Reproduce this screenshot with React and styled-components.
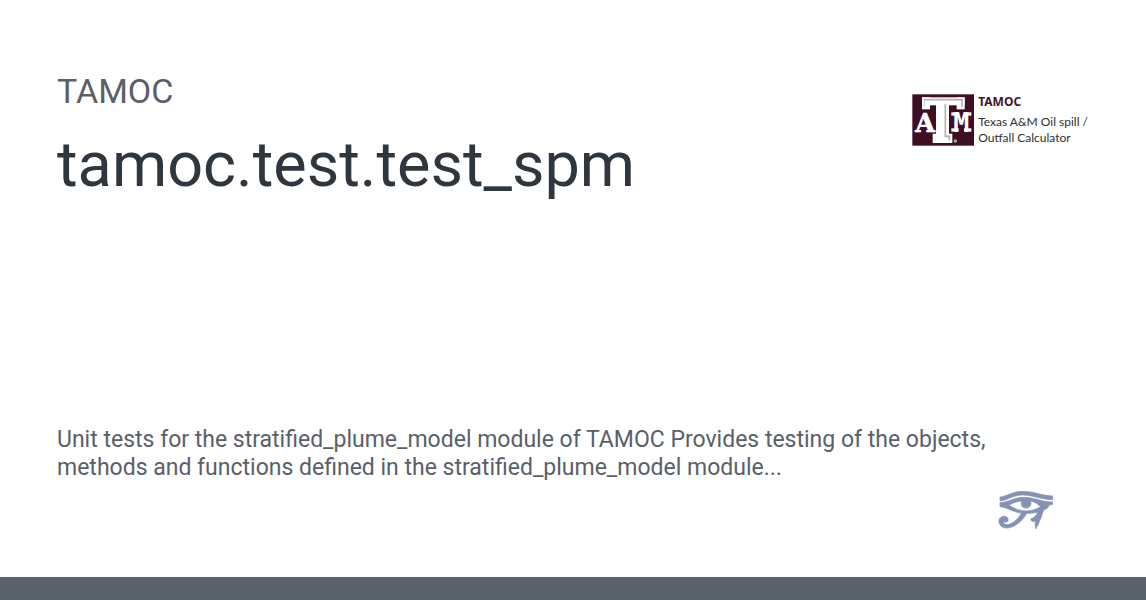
import React from "react";
import styled, { createGlobalStyle } from "styled-components";

const GlobalStyle = createGlobalStyle`
  * { box-sizing: border-box; }
  body { margin: 0; background: #ffffff; }
`;

const Card = styled.main`
  display: flex;
  flex-direction: column;
  min-height: 100vh;
  font-family: Roboto, sans-serif;
  color: #5a6069;
`;

const Content = styled.div`
  flex: 1;
  display: flex;
  flex-direction: column;
  justify-content: space-between;
  padding: 70px 58px 46px 57px;
`;

const Header = styled.header`
  display: flex;
  justify-content: space-between;
  align-items: flex-start;
`;

const SiteName = styled.p`
  margin: 0;
  font-size: 34px;
  line-height: 42px;
`;

const Title = styled.h1`
  margin: 13px 0 0;
  font-size: 63px;
  line-height: 80px;
  font-weight: 400;
  color: #2f363d;
`;

const Brand = styled.div`
  display: flex;
  gap: 4px;
  margin-top: 24px;
  font-family: Lato, sans-serif;
  font-size: 12px;
  line-height: 16px;
  white-space: nowrap;
  color: #303030;
`;

const BrandName = styled.strong`
  display: block;
  margin-bottom: 4px;
  font-family: "Noto Sans", sans-serif;
  color: #47122a;
`;

const BrandLine = styled.span`
  display: block;
`;

const Footer = styled.footer`
  display: flex;
  flex-direction: column;
`;

const Description = styled.p`
  margin: 0;
  max-width: 960px;
  font-size: 23px;
  line-height: 28px;
`;

const EyeRow = styled.div`
  display: flex;
  justify-content: flex-end;
  margin-top: 9px;
  padding-right: 34px;
`;

const BottomBar = styled.div`
  height: 23px;
  background: #5a626b;
`;

function Emblem() {
  return (
    <svg width="62" height="52" viewBox="8 11 186 156" role="img" aria-label="Texas A&M">
      <rect x="9" y="12" width="185" height="154" fill="#3e0f22" />
      <g fill="#ffffff">
        <rect x="38" y="21" width="128" height="24" />
        <rect x="38" y="21" width="24" height="36" />
        <rect x="142" y="21" width="24" height="36" />
        <rect x="80" y="30" width="39" height="118" />
        <rect x="70" y="130" width="59" height="28" />
      </g>
      <g fill="none" stroke="#b3b3b3" strokeWidth="5">
        <path d="M44 28H158V50" />
        <path d="M45 50V32" stroke="#dddddd" />
        <path d="M108 40V138H120V150" />
      </g>
      <g fill="#ffffff" fontWeight="700" textAnchor="middle">
        <text x="47" y="124" fontSize="76" stroke="#ffffff" strokeWidth="2" fontFamily="'DejaVu Serif', serif">A</text>
        <text x="156" y="124" fontSize="80" fontFamily="'DejaVu Sans Mono', monospace">M</text>
      </g>
      <g fill="#ffffff">
        <rect x="126" y="66" width="12" height="10" />
        <rect x="174" y="66" width="12" height="10" />
        <rect x="126" y="114" width="22" height="10" />
        <rect x="164" y="114" width="22" height="10" />
      </g>
      <circle cx="138" cy="152" r="5" fill="#bba6af" />
    </svg>
  );
}

function EyeOfHorus() {
  return (
    <svg
      width="56"
      height="40"
      viewBox="24 18 168 120"
      fill="#8492b4"
      stroke="#8492b4"
      strokeWidth="2"
      role="img"
      aria-label="Eye of Horus"
    >
      <path d="M30 36C52 33 66 20 94 19C128 18 150 31 188 33V44C148 43 126 29 96 30C68 31 56 44 30 48Z" />
      <path
        fillRule="evenodd"
        d="M30 53C56 51 70 38 99 37C133 36 151 51 188 51V58L176 61C177 68 170 72 161 75C154 94 149 113 137 132L135 108C126 111 121 108 123 101C133 99 139 91 143 82C119 87 91 86 72 79C60 75 47 67 30 65ZM57 60C69 68 78 73 91 76C112 81 134 76 151 65C145 58 136 51 122 48C125 60 119 69 108 69C97 69 91 60 95 48C79 49 69 55 57 60Z"
      />
      <path d="M112 82C101 104 78 126 54 129C36 131 25 119 27 105C30 92 50 89 54 101C57 110 47 115 42 109C38 117 49 121 59 117C79 111 89 93 96 80Z" />
    </svg>
  );
}

export default function App() {
  return (
    <>
      <GlobalStyle />
      <Card>
        <Content>
          <Header>
            <div>
              <SiteName>TAMOC</SiteName>
              <Title>tamoc.test.test_spm</Title>
            </div>
            <Brand>
              <Emblem />
              <div>
                <BrandName>TAMOC</BrandName>
                <BrandLine>Texas A&amp;M Oil spill /</BrandLine>
                <BrandLine>Outfall Calculator</BrandLine>
              </div>
            </Brand>
          </Header>
          <Footer>
            <Description>
              Unit tests for the stratified_plume_model module of TAMOC Provides testing of the
              objects, methods and functions defined in the stratified_plume_model module...
            </Description>
            <EyeRow>
              <EyeOfHorus />
            </EyeRow>
          </Footer>
        </Content>
        <BottomBar />
      </Card>
    </>
  );
}
